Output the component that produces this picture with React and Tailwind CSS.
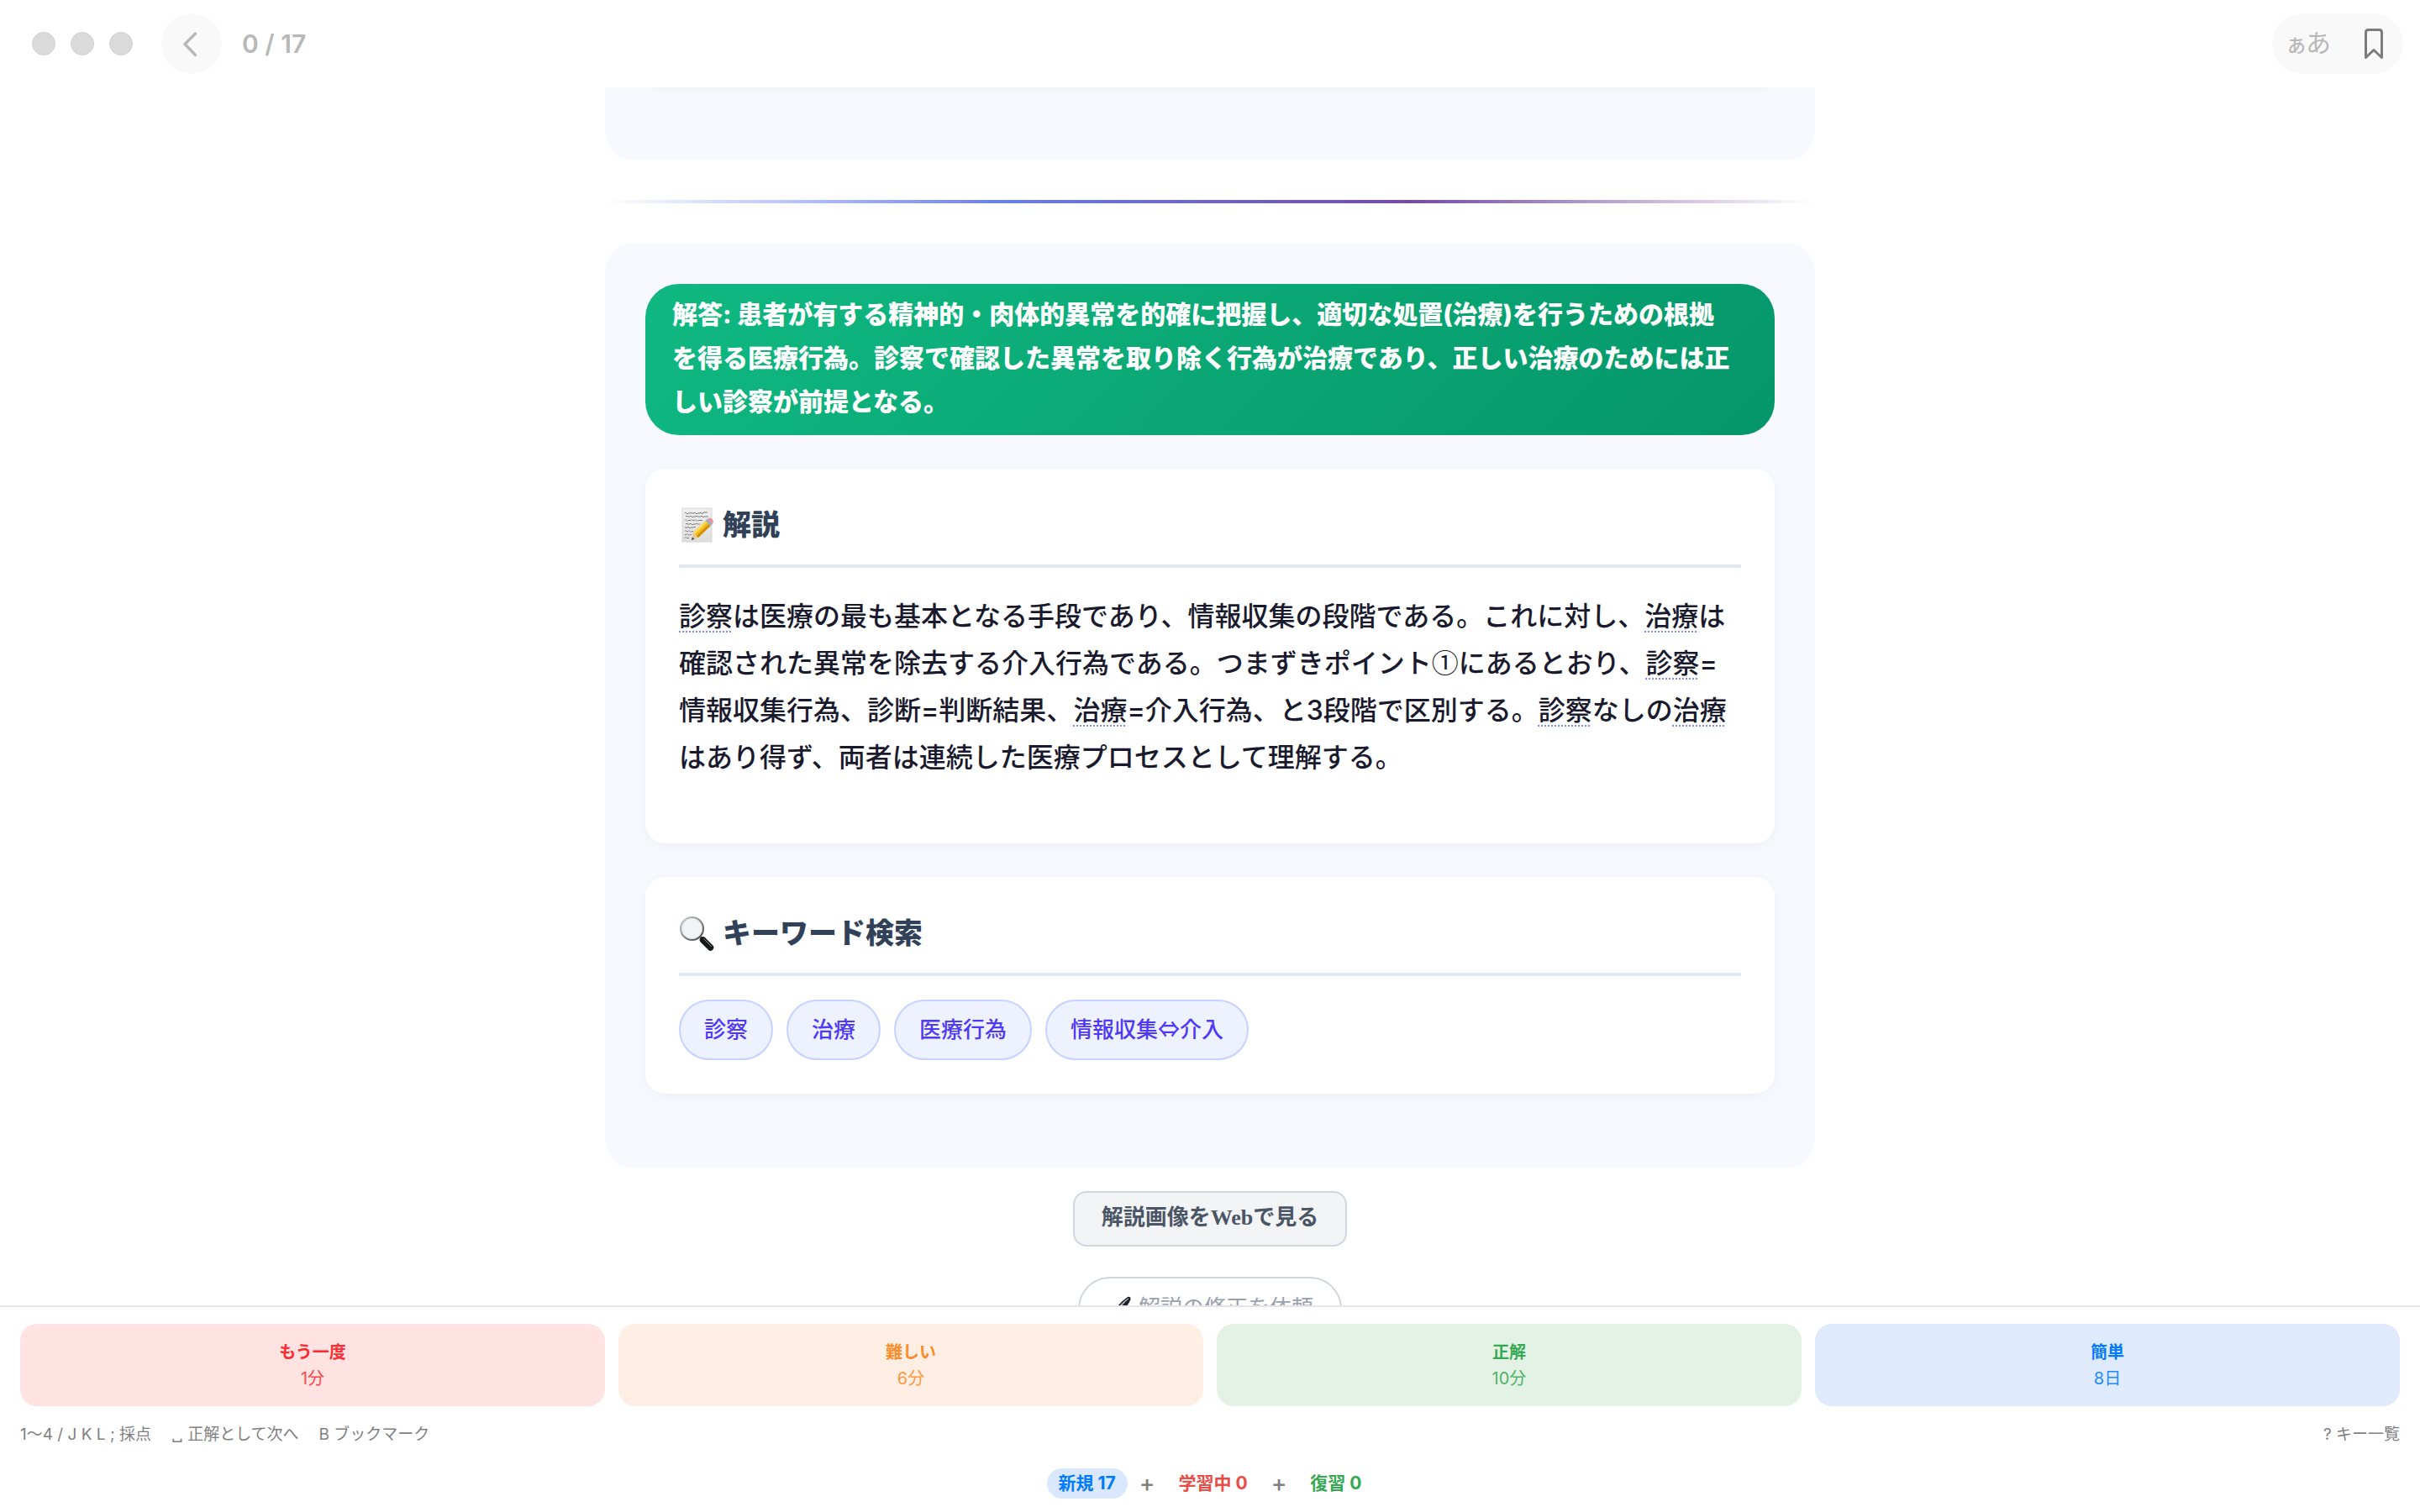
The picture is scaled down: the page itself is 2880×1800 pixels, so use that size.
import { useState } from "react";

const grades = [
  { label: "もう一度", interval: "1分", className: "bg-[#ffe2e2] text-[#fb2c30]" },
  { label: "難しい", interval: "6分", className: "bg-[#ffeee3] text-[#fb8c28]" },
  { label: "正解", interval: "10分", className: "bg-[#e4f2e5] text-[#34a853]" },
  { label: "簡単", interval: "8日", className: "bg-[#e0eafd] text-[#007aff]" },
];

const keywords = ["診察", "治療", "医療行為", "情報収集⇔介入"];

const MemoIcon = () => (
  <svg viewBox="0 0 42 42" className="w-[42px] h-[42px] shrink-0" aria-hidden="true">
    <defs>
      <linearGradient id="paper" x1="0" y1="0" x2="0" y2="1">
        <stop offset="0" stopColor="#efefef" />
        <stop offset="1" stopColor="#dedede" />
      </linearGradient>
    </defs>
    <rect x="4" y="1" width="35" height="40" fill="url(#paper)" stroke="#cfcfcf" strokeWidth="0.8" />
    <g fill="none" stroke="#7d7d7d" strokeWidth="1">
      <path d="M7 7q1-2 2 0t2 0h2q1-2 2 0h3q1-2 2 0t2 0h3q1-2 2 0t2-1h5" />
      <path d="M8 11q1-2 2 0h3q1-2 2 0t2 0h3q1-2 2 0h4q1-2 2 0t2 0h5" />
      <path d="M7 15.500q1-2 2 0t2 0h3q1-2 2 0h3q1-2 2 0t2 0h5" />
      <path d="M8 20q1-2 2 0h3q1-2 2 0t2 0h3q1-2 2 0h3" />
      <path d="M7 24h3q1-2 2 0t2 0h4q1-2 2 0" />
      <path d="M7 28.500q1-2 2 0h2q1-2 2 0t2 0h2" />
      <path d="M7 32.500h2q1-2 2 0t2 0h2M7 36.500q1-2 2 0h3" />
    </g>
    <path d="M15 39l2-9 6 6z" fill="#e9c99a" />
    <path d="M15 39l.9-3.600 2.600 2.300z" fill="#444" />
    <path d="M17 30L31.500 16l6 6L23 36z" fill="#f5b81c" />
    <path d="M17 30L31.500 16l2 2L19 32z" fill="#ffd95a" />
    <path d="M21 34L35.500 20l2 2L23 36z" fill="#d08f0b" />
    <path d="M31.500 16l2.500-2.400 6 6-2.500 2.400z" fill="#9fb0bd" />
    <path d="M34 13.600q3-2.100 5.500.400t.500 5.600z" fill="#f08f96" />
  </svg>
);

const SearchIcon = () => (
  <svg viewBox="0 0 42 42" className="w-[42px] h-[42px] shrink-0" aria-hidden="true">
    <defs>
      <linearGradient id="handle" x1="0" y1="1" x2="1" y2="0">
        <stop offset="0" stopColor="#111" />
        <stop offset="0.5" stopColor="#3b3b3b" />
        <stop offset="1" stopColor="#666" />
      </linearGradient>
      <linearGradient id="rim" x1="0" y1="0" x2="1" y2="1">
        <stop offset="0" stopColor="#b9d3e4" />
        <stop offset="0.5" stopColor="#8a8a8a" />
        <stop offset="1" stopColor="#3e3e3e" />
      </linearGradient>
    </defs>
    <path d="M25 25l4 4" stroke="#777" strokeWidth="3" />
    <path d="M28.500 29l9 9" stroke="#17191b" strokeWidth="7.500" strokeLinecap="round" />
    <path d="M29.500 27.500l9.500 9.500" stroke="#8d8d8d" strokeWidth="1" />
    <circle cx="15.500" cy="15.500" r="13.500" fill="#f2f3f4" stroke="url(#rim)" strokeWidth="2" />
    <circle cx="15.500" cy="15.500" r="12" fill="none" stroke="#d5d5d5" strokeWidth="0.8" />
  </svg>
);

const PenIcon = () => (
  <svg viewBox="0 0 32 32" className="w-8 h-8 shrink-0" aria-hidden="true">
    <path d="M8 22Q12 11 25 2q4-1 3.500 3Q23 17 12 26z" fill="#1d2228" />
    <path d="M12 18Q17 9 25.500 3.500l1 .500Q19 10 14 19z" fill="#aeb9c4" />
    <path d="M8 22l4 4-8 4z" fill="#b9b9b9" />
  </svg>
);

const Term = ({ children }) => (
  <span className="underline decoration-dotted decoration-2 decoration-[#818cf8] underline-offset-[6px]">
    {children}
  </span>
);

const Card = ({ icon, title, children }) => (
  <section className="bg-white rounded-3xl p-10 mb-10 shadow-[0_4px_16px_rgba(0,0,0,0.04)]">
    <h2 className="flex items-center gap-2.5 pb-5 border-b-4 border-slate-200 text-[34px] leading-[54px] font-extrabold text-slate-700">
      {icon}
      {title}
    </h2>
    {children}
  </section>
);

const Header = ({ bookmarked, onBookmark }) => (
  <header className="h-[104px] shrink-0 flex items-center justify-between pl-[38px] pr-5">
    <div className="flex items-center">
      <div className="flex gap-[18px]">
        <span className="w-7 h-7 rounded-full bg-[#dadada] border border-[#d0d0d0]"></span>
        <span className="w-7 h-7 rounded-full bg-[#dadada] border border-[#d0d0d0]"></span>
        <span className="w-7 h-7 rounded-full bg-[#dadada] border border-[#d0d0d0]"></span>
      </div>
      <button
        type="button"
        aria-label="戻る"
        className="ml-[34px] w-[72px] h-[72px] rounded-full bg-[#f9f9f9] flex items-center justify-center"
      >
        <svg viewBox="0 0 72 72" className="w-[72px] h-[72px]" aria-hidden="true">
          <path d="M40.500 24L28 36.500 40.500 49.500" fill="none" stroke="#b8b8b8" strokeWidth="3.400" strokeLinecap="round" strokeLinejoin="round" />
        </svg>
      </button>
      <span className="ml-6 text-[30px] font-semibold text-[#b8b8b8]">0 / 17</span>
    </div>
    <div className="h-[72px] rounded-full bg-[#f9f9f9] flex items-center pl-[18px] pr-[22px]">
      <button type="button" aria-label="文字サイズ" className="flex items-baseline text-[#b8b8b8] leading-9">
        <span className="text-[22px] font-medium">あ</span>
        <span className="text-[30px]">あ</span>
      </button>
      <button type="button" aria-label="ブックマーク" aria-pressed={bookmarked} onClick={onBookmark} className="ml-[38px]">
        <svg viewBox="0 0 26 40" className="w-[26px] h-10" aria-hidden="true">
          <path
            d="M3.500 36.500V6.500q0-3 3-3h13q3 0 3 3v30L13 27.500z"
            fill={bookmarked ? "#7c7c7c" : "none"}
            stroke="#7c7c7c"
            strokeWidth="3"
            strokeLinejoin="round"
          />
        </svg>
      </button>
    </div>
  </header>
);

const Footer = () => (
  <footer className="shrink-0 border-t-2 border-[#e5e5e5] bg-white px-6 pt-5 pb-4">
    <div className="grid grid-cols-4 gap-4">
      {grades.map(g => (
        <button
          key={g.label}
          type="button"
          className={`rounded-[20px] h-[98px] pt-0.5 flex flex-col items-center justify-center text-xl leading-[31px] ${g.className}`}
        >
          <span className="font-bold">{g.label}</span>
          <span className="opacity-85">{g.interval}</span>
        </button>
      ))}
    </div>
    <div className="mt-[18px] flex justify-between text-[19px] leading-8 text-[#7f7f7f]">
      <p className="flex gap-6">
        <span>1〜4 / J K L ; 採点</span>
        <span>␣ 正解として次へ</span>
        <span>B ブックマーク</span>
      </p>
      <button type="button">? キー一覧</button>
    </div>
    <div className="mt-6 flex items-center justify-center gap-3.5 text-[21px] leading-9 font-bold">
      <span className="px-3.5 rounded-full bg-[#dae8fd] text-[#007aff]">新規 17</span>
      <span className="text-[28px] leading-9 font-medium text-[#7f7f7f]">+</span>
      <span className="px-3.5 text-[#ea4c46]">学習中 0</span>
      <span className="text-[28px] leading-9 font-medium text-[#7f7f7f]">+</span>
      <span className="px-3.5 text-[#34a853]">復習 0</span>
    </div>
  </footer>
);

const App = () => {
  const [bookmarked, setBookmarked] = useState(false);

  return (
    <div lang="ja" className="h-screen flex flex-col bg-white font-[Inter,'Noto_Sans_CJK_JP',sans-serif]">
      <Header bookmarked={bookmarked} onBookmark={() => setBookmarked(b => !b)} />

      <main className="flex-1 min-h-0 overflow-hidden">
        <div className="w-1/2 mx-auto">
          {/* Tail of the question panel */}
          <div className="rounded-b-[32px] bg-[#f8f9fe] px-12 pb-[86px]">
            <div className="h-10 -mt-10 rounded-b-3xl bg-white shadow-[0_4px_16px_rgba(0,0,0,0.04)]"></div>
          </div>

          <hr className="my-12 h-1 border-0 bg-[linear-gradient(90deg,transparent,#667eea,#764ba2,transparent)]" />

          <div className="rounded-[32px] bg-[#f8f9fe] px-12 pt-12 pb-12 flow-root">
            <div className="mb-10 rounded-[40px] pl-8 pr-12 pt-2.5 pb-3.5 bg-[linear-gradient(135deg,#10b981,#059669)] text-white text-[30px] leading-[52px] font-extrabold">
              解答: 患者が有する精神的・肉体的異常を的確に把握し、適切な処置(治療)を行うための根拠を得る医療行為。診察で確認した異常を取り除く行為が治療であり、正しい治療のためには正しい診察が前提となる。
            </div>

            <Card icon={<MemoIcon />} title="解説">
              <p className="mt-[30px] mb-[34px] text-[32px] leading-[56px] font-medium text-[#1a1a2e]">
                <Term>診察</Term>は医療の最も基本となる手段であり、情報収集の段階である。これに対し、<Term>治療</Term>は確認された異常を除去する介入行為である。つまずきポイント<span className="font-['Noto_Sans_CJK_JP',sans-serif] font-normal leading-none">①</span>にあるとおり、<Term>診察</Term>=情報収集行為、診断=判断結果、<Term>治療</Term>=介入行為、と3段階で区別する。<Term>診察</Term>なしの<Term>治療</Term>はあり得ず、両者は連続した医療プロセスとして理解する。
              </p>
            </Card>

            <Card icon={<SearchIcon />} title="キーワード検索">
              <div className="mt-7 flex flex-wrap gap-4 font-['Noto_Sans_CJK_JP',sans-serif]">
                {keywords.map(k => (
                  <a
                    key={k}
                    href="#"
                    className="rounded-full border-2 border-indigo-200 bg-indigo-50 px-7 pt-2.5 pb-3.5 text-[26px] leading-[44px] font-medium text-indigo-600"
                  >
                    {k}
                  </a>
                ))}
              </div>
            </Card>
          </div>

          <div className="mt-7 flex flex-col items-center gap-9 font-['Liberation_Serif','Noto_Sans_CJK_JP',serif] text-[26px]">
            <a href="#" className="rounded-2xl border-2 border-gray-300 bg-gray-100 px-8 pt-3 pb-3.5 leading-9 font-bold text-gray-600">
              解説画像をWebで見る
            </a>
            <button type="button" className="rounded-full border-2 border-gray-300 bg-white px-8 py-4.5 flex items-center gap-1.5 leading-9 text-gray-400">
              <PenIcon />
              解説の修正を依頼
            </button>
          </div>
        </div>
      </main>

      <Footer />
    </div>
  );
};

export default App;
